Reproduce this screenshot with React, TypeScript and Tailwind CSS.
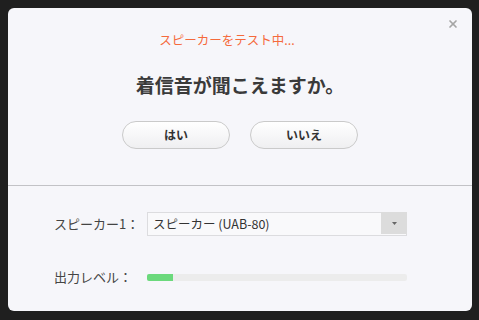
import { X } from 'lucide-react';

const jp = "font-['Noto_Sans_CJK_JP','Noto_Sans',sans-serif]";

export default function App() {
  return (
    <div className={`w-[479px] h-[320px] bg-[#1f1f1f] p-2 ${jp}`}>
      <div className="relative w-[464px] h-[303px] bg-[#f6f6fa] rounded-[6px] flex flex-col">
        {/* close */}
        <button className="absolute right-[13px] top-[10px] text-[#a5a5a5]">
          <X className="w-[12px] h-[12px]" strokeWidth={3.4} />
        </button>

        <p className="pt-[23px] h-[41px] text-center text-[12.5px] leading-[18px] text-[#f56a3c] pr-[26px]">
          スピーカーをテスト中...
        </p>

        <h2 className="mt-[22px] text-center text-[19px] leading-[28px] font-bold text-[#3a3a3a]">
          着信音が聞こえますか。
        </h2>

        <div className="mt-[22px] flex justify-center gap-[20px]">
          <button className="w-[108px] h-[28px] rounded-full border border-[#cacaca] bg-gradient-to-b from-[#ffffff] to-[#efeff1] text-[12px] font-bold text-[#333]">
            はい
          </button>
          <button className="w-[108px] h-[28px] rounded-full border border-[#cacaca] bg-gradient-to-b from-[#ffffff] to-[#efeff1] text-[12px] font-bold text-[#333]">
            いいえ
          </button>
        </div>

        <div className="mt-[36px] h-px bg-[#c2c2c6]" />

        {/* speaker select */}
        <div className="mt-[26px] flex items-center h-[24px] pl-[46px]">
          <span className="w-[93px] text-[13px] text-[#444]">スピーカー1：</span>
          <div className="w-[260px] h-[24px] flex border border-[#dcdcdf] bg-[#f9f9fb]">
            <span className="flex-1 pl-[5px] text-[12.5px] leading-[22px] text-[#333]">スピーカー (UAB-80)</span>
            <div className="w-[26px] h-full bg-[#dcdcdc] flex items-center justify-center -my-px -mr-px">
              <svg width="5" height="3" viewBox="0 0 5 3">
                <path d="M0 0h5L2.5 3z" fill="#666" />
              </svg>
            </div>
          </div>
        </div>

        {/* output level */}
        <div className="mt-[29px] flex items-center h-[24px] pl-[46px]">
          <span className="w-[93px] text-[13px] text-[#444]">出力レベル：</span>
          <div className="w-[260px] h-[7px] bg-[#ececec] rounded-[2px] overflow-hidden">
            <div className="h-full bg-[#6bd97c]" style={{ width: 26 }} />
          </div>
        </div>
      </div>
    </div>
  );
}
